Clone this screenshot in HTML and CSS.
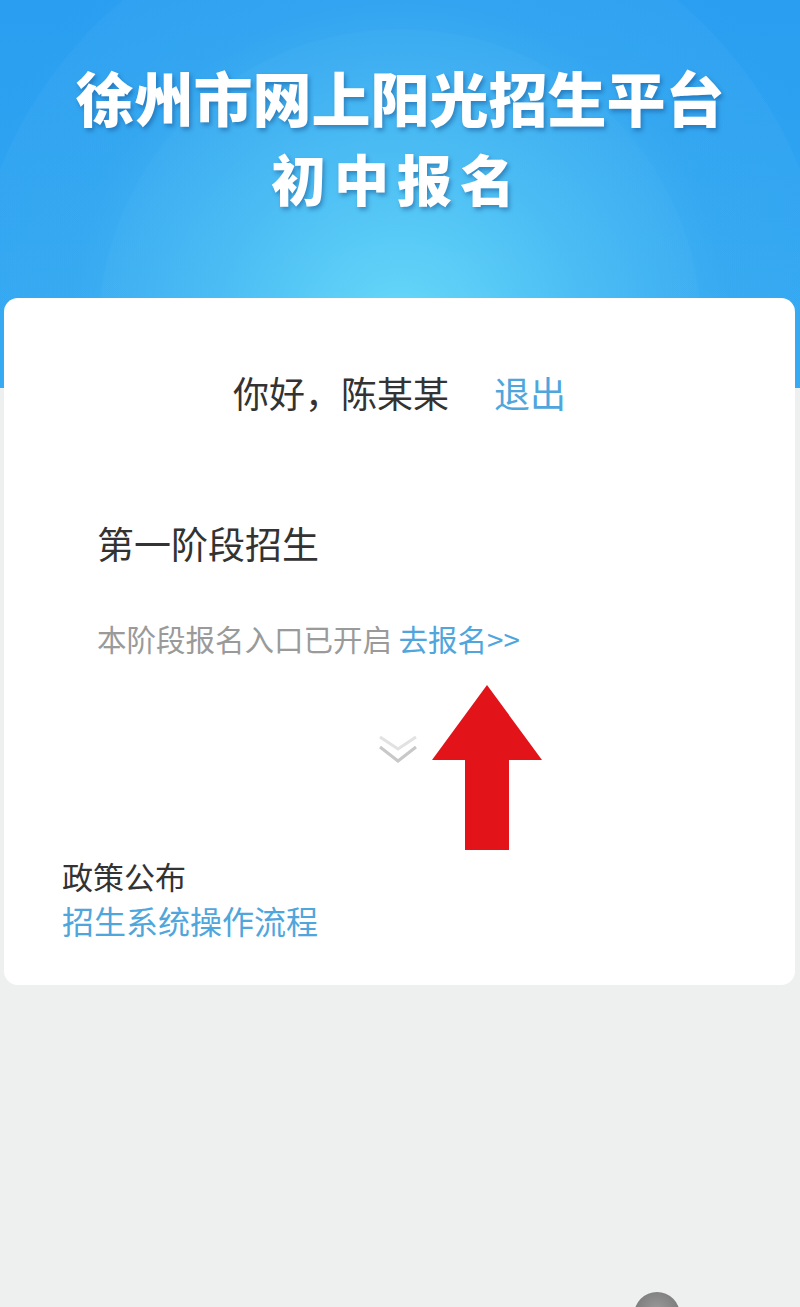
FILE: index.html
```html
<!DOCTYPE html>
<html lang="zh-CN">
<head>
    <meta charset="UTF-8">
    <meta name="viewport" content="width=device-width, initial-scale=1.0">
    <title>徐州市网上阳光招生平台</title>
    <link rel="stylesheet" href="styles.css">
</head>
<body>
    <div class="Header">
        <h1 class="title">徐州市网上阳光招生平台</h1>
        <h2 class="subtitle">初中报名</h2>
    </div>

    <div class="Card">
        <div class="greeting">
            <span class="user">你好，陈某某</span>
            <a class="logout">退出</a>
        </div>

        <div class="stage">
            <div class="stage-title">第一阶段招生</div>
            <div class="stage-desc">本阶段报名入口已开启 <a class="go">去报名&gt;&gt;</a></div>
        </div>

        <div class="more">
            <svg width="42" height="34" viewBox="0 0 42 34">
                <polyline points="3,3 21,15 39,3" fill="none" stroke="#e2e2e2" stroke-width="3"/>
                <polyline points="3,13 21,27 39,13" fill="none" stroke="#c8c8c8" stroke-width="3"/>
            </svg>
        </div>

        <div class="policy">
            <div class="policy-title">政策公布</div>
            <a class="policy-link">招生系统操作流程</a>
        </div>

        <svg class="arrow" width="112" height="168" viewBox="0 0 112 168">
            <polygon points="55,1 110,76 77,76 77,166 33,166 33,76 0,76" fill="#e2141a"/>
        </svg>
    </div>

    <div class="float-btn"></div>
</body>
</html>
```

FILE: styles.css
```css
body{
    margin: 0;
    padding: 0;
    height: 1307px;
    overflow: hidden;
    position: relative;
    background-color: #eef0ef;
    font-family: "Noto Sans CJK SC", "Noto Sans", sans-serif;
}
a{
    color: #4fa6dd;
    text-decoration: none;
    cursor: pointer;
}
.Header{
    height: 388px;
    padding-top: 57px;
    box-sizing: border-box;
    text-align: center;
    color: white;
    background:
        radial-gradient(circle at 50% 330px, rgba(110, 225, 250, 0.85) 0, rgba(90, 205, 245, 0.55) 180px, rgba(60, 175, 240, 0.2) 330px, rgba(40, 160, 240, 0) 460px),
        radial-gradient(circle at 50% 330px, rgba(255, 255, 255, 0.03) 0 300px, rgba(255, 255, 255, 0) 302px),
        radial-gradient(circle at 50% 330px, rgba(255, 255, 255, 0.03) 0 430px, rgba(255, 255, 255, 0) 432px),
        linear-gradient(#2a9ef0, #30a8f2);
}
.title{
    margin: 0;
    font-size: 59px;
    line-height: 80px;
    font-weight: 900;
    text-shadow: 2px 3px 4px rgba(20, 70, 130, 0.45);
}
.subtitle{
    margin: 0;
    font-size: 55px;
    line-height: 80px;
    font-weight: 900;
    letter-spacing: 8px;
    padding-right: 6px;
    text-shadow: 2px 3px 4px rgba(20, 70, 130, 0.45);
}
.Card{
    position: relative;
    margin: -90px 5px 0 4px;
    height: 687px;
    background-color: white;
    border-radius: 14px;
    box-sizing: border-box;
    padding-top: 69px;
}
.greeting{
    display: flex;
    justify-content: center;
    gap: 45px;
    font-size: 36px;
    line-height: 50px;
    color: #333;
}
.stage{
    padding: 101px 0 0 93px;
}
.stage-title{
    font-size: 37px;
    line-height: 50px;
    color: #333;
}
.stage-desc{
    margin-top: 50px;
    font-size: 29.5px;
    line-height: 40px;
    color: #9a9a9a;
}
.stage-desc .go{
    font-size: 29.5px;
}
.more{
    margin-top: 76px;
    display: flex;
    justify-content: center;
    padding-right: 4px;
}
.policy{
    padding: 86px 0 0 58px;
}
.policy-title{
    font-size: 31px;
    line-height: 44px;
    color: #333;
}
.policy-link{
    display: block;
    font-size: 32px;
    line-height: 44px;
}
.arrow{
    position: absolute;
    left: 428px;
    top: 386px;
}
.float-btn{
    position: absolute;
    left: 634px;
    top: 1292px;
    width: 46px;
    height: 46px;
    border-radius: 50%;
    background: radial-gradient(circle at 50% 40%, #9a9a9a, #6c6c6c);
}
```
